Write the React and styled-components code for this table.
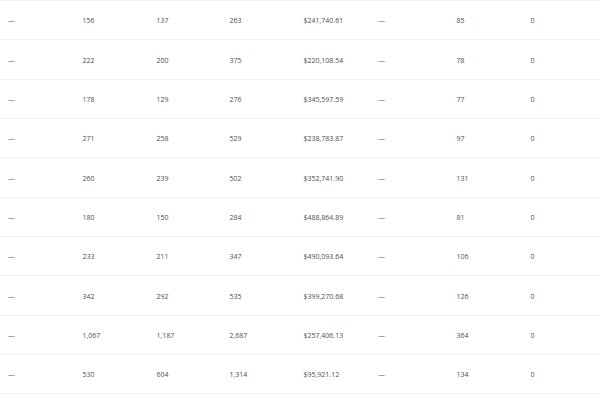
import React from "react";
import styled, { createGlobalStyle } from "styled-components";

const Global = createGlobalStyle`
  html, body { margin: 0; padding: 0; background: #ffffff; }
  body { font-family: "Open Sans", "Noto Sans", sans-serif; }
`;

const Table = styled.div`
  width: 600px;
  display: flex;
  flex-direction: column;
  border-bottom: 1px solid #eeeeee;
`;

const Row = styled.div`
  display: grid;
  grid-template-columns: 74.5px 74px 73px 74px 74.5px 78.5px 74px 1fr;
  box-sizing: border-box;
  height: 39.35px;
  border-top: 1px solid #eeeeee;
  align-items: center;
`;

const Cell = styled.div`
  padding-left: 8px;
  padding-top: 2px;
  font-size: 7px;
  line-height: 10px;
  color: ${(p) => (p.$muted ? "#6f675f" : "#564d45")};
  white-space: nowrap;
`;

const rows = [
  ["156", "137", "263", "$241,740.61", "85", "0"],
  ["222", "200", "375", "$220,108.54", "78", "0"],
  ["178", "129", "276", "$345,597.59", "77", "0"],
  ["271", "258", "529", "$238,783.87", "97", "0"],
  ["260", "239", "502", "$352,741.90", "131", "0"],
  ["180", "150", "284", "$488,864.89", "81", "0"],
  ["233", "211", "347", "$490,093.64", "106", "0"],
  ["342", "292", "535", "$399,270.68", "126", "0"],
  ["1,067", "1,187", "2,687", "$257,406.13", "364", "0"],
  ["530", "604", "1,314", "$95,921.12", "134", "0"],
];

export default function App() {
  return (
    <>
      <Global />
      <Table>
        {rows.map((r, i) => (
          <Row key={i}>
            <Cell $muted>—</Cell>
            <Cell>{r[0]}</Cell>
            <Cell>{r[1]}</Cell>
            <Cell>{r[2]}</Cell>
            <Cell>{r[3]}</Cell>
            <Cell $muted>—</Cell>
            <Cell>{r[4]}</Cell>
            <Cell>{r[5]}</Cell>
          </Row>
        ))}
      </Table>
    </>
  );
}
